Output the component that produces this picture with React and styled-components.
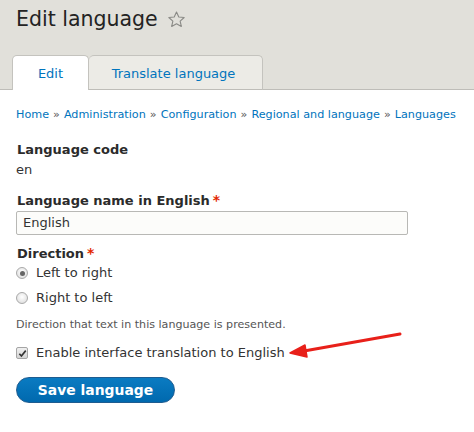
import React from 'react';
import styled, { createGlobalStyle } from 'styled-components';

const GlobalStyle = createGlobalStyle`
  body {
    margin: 0;
    background: #ffffff;
    font-family: "DejaVu Sans", "Liberation Sans", sans-serif;
    color: #333333;
  }
`;

const Page = styled.div`
  position: relative;
  width: 474px;
  height: 432px;
  overflow: hidden;
`;

const Header = styled.header`
  background: #e1e0da;
  border-bottom: 1px solid #bebdb8;
  padding: 6px 0 0 16px;
`;

const Title = styled.h1`
  margin: 0;
  font-size: 20.5px;
  line-height: 26px;
  font-weight: normal;
  color: #232323;
  display: flex;
  align-items: center;
  gap: 9px;
`;

const TabList = styled.nav`
  display: flex;
  margin: 23px 0 -1px -4px;
`;

const Tab = styled.a`
  box-sizing: border-box;
  width: ${(p) => p.width}px;
  height: 35px;
  display: flex;
  align-items: center;
  justify-content: center;
  font-size: 13px;
  color: #0074bd;
  text-decoration: none;
  border: 1px solid #c4c3be;
  border-bottom: ${(p) => (p.active ? 'none' : '1px solid #bebdb8')};
  border-left: ${(p) => (p.active ? '1px solid #c4c3be' : 'none')};
  border-radius: 5px 5px 0 0;
  background: ${(p) => (p.active ? '#ffffff' : '#ecebe6')};
  padding: 1px ${(p) => (p.active ? 0 : 4)}px 0 0;
`;

const Content = styled.main`
  padding: 16px 16px 0;
`;

const Breadcrumb = styled.div`
  font-size: 11.2px;
  line-height: 18px;
  color: #0074bd;
  white-space: nowrap;
`;

const Sep = styled.span`
  color: #555;
  margin: 0 4px;
`;

const Item = styled.div`
  margin-top: ${(p) => p.top || 0}px;
`;

const Label = styled.div`
  font-weight: bold;
  font-size: 13px;
  line-height: 18px;
  color: #2b2b2b;
  padding-left: 1px;
`;

const Required = styled.span`
  color: #e32700;
  margin-left: 3px;
  font-size: 14px;
`;

const Value = styled.div`
  font-size: 13px;
  line-height: 18px;
  margin-top: 2px;
`;

const TextInput = styled.div`
  box-sizing: border-box;
  width: 392px;
  height: 24px;
  margin-top: 1px;
  border: 1px solid #b8b8b5;
  border-radius: 2px;
  background: #fcfcfa;
  font-size: 13px;
  line-height: 22px;
  padding: 0 6px;
  color: #333;
`;

const OptionList = styled.div`
  display: flex;
  flex-direction: column;
  gap: 5px;
`;

const OptionRow = styled.label`
  display: flex;
  align-items: center;
  gap: 8px;
  font-size: 13px;
  line-height: 18px;
  height: ${(p) => p.h || 20}px;
  color: #333;
`;

const Radio = styled.span`
  box-sizing: border-box;
  width: 12px;
  height: 12px;
  border-radius: 50%;
  border: 1px solid #a9a9a9;
  background: radial-gradient(circle at 50% 40%, #ffffff, #d8d8d8);
  display: flex;
  align-items: center;
  justify-content: center;
  &::after {
    content: '';
    display: ${(p) => (p.checked ? 'block' : 'none')};
    width: 5px;
    height: 5px;
    border-radius: 50%;
    background: #666;
  }
`;

const Checkbox = styled.span`
  box-sizing: border-box;
  width: 12px;
  height: 12px;
  border-radius: 2px;
  border: 1px solid #a5a5a5;
  background: linear-gradient(#f0f0f0, #d4d4d4);
  display: flex;
  align-items: center;
  justify-content: center;
`;

const Description = styled.div`
  font-size: 11.1px;
  line-height: 16px;
  color: #555;
  margin-top: 9px;
`;

const Button = styled.button`
  margin-top: 13px;
  width: 159px;
  height: 26px;
  border: 1px solid #1e5c90;
  border-radius: 20px;
  background: linear-gradient(#0a7bc2, #0069ae);
  color: #ffffff;
  font-family: "DejaVu Sans", sans-serif;
  font-weight: bold;
  font-size: 13.9px;
  padding: 0;
`;

const Arrow = styled.svg`
  position: absolute;
  left: 282px;
  top: 326px;
`;

const StarIcon = () => (
  <svg width="19" height="19" viewBox="0 0 24 24">
    <path
      d="M12 2.5l2.9 6.3 6.8.7-5.1 4.6 1.5 6.7L12 17.3l-6.1 3.5 1.5-6.7-5.1-4.6 6.8-.7z"
      fill="none"
      stroke="#8a8a86"
      strokeWidth="1.4"
      strokeLinejoin="round"
    />
  </svg>
);

const CheckMark = () => (
  <svg width="9" height="9" viewBox="0 0 10 10">
    <path d="M1.5 5.2l2.3 2.5L8.6 1.8" fill="none" stroke="#333" strokeWidth="1.8" />
  </svg>
);

const crumbs = ['Home', 'Administration', 'Configuration', 'Regional and language', 'Languages'];

const App = () => (
  <Page>
    <GlobalStyle />
    <Header>
      <Title>
        Edit language
        <StarIcon />
      </Title>
      <TabList>
        <Tab active width={77}>Edit</Tab>
        <Tab width={174}>Translate language</Tab>
      </TabList>
    </Header>
    <Content>
      <Breadcrumb>
        {crumbs.map((c, i) => (
          <React.Fragment key={c}>
            {i > 0 && <Sep>»</Sep>}
            {c}
          </React.Fragment>
        ))}
      </Breadcrumb>
      <Item top={17}>
        <Label>Language code</Label>
        <Value>en</Value>
      </Item>
      <Item top={12}>
        <Label>
          Language name in English<Required>*</Required>
        </Label>
        <TextInput>English</TextInput>
      </Item>
      <Item top={9}>
        <Label>
          Direction<Required>*</Required>
        </Label>
        <OptionList>
          <OptionRow>
            <Radio checked />
            Left to right
          </OptionRow>
          <OptionRow>
            <Radio />
            Right to left
          </OptionRow>
        </OptionList>
        <Description>Direction that text in this language is presented.</Description>
      </Item>
      <Item top={9}>
        <OptionRow h={22}>
          <Checkbox>
            <CheckMark />
          </Checkbox>
          Enable interface translation to English
        </OptionRow>
      </Item>
      <Button>Save language</Button>
    </Content>
    <Arrow width="130" height="36" viewBox="0 0 130 36">
      <line x1="118" y1="8" x2="22" y2="25" stroke="#e8201a" strokeWidth="3" strokeLinecap="round" />
      <path d="M8 27 L23 19 L25 31 Z" fill="#e8201a" stroke="#e8201a" strokeWidth="1.5" strokeLinejoin="round" />
    </Arrow>
  </Page>
);

export default App;
